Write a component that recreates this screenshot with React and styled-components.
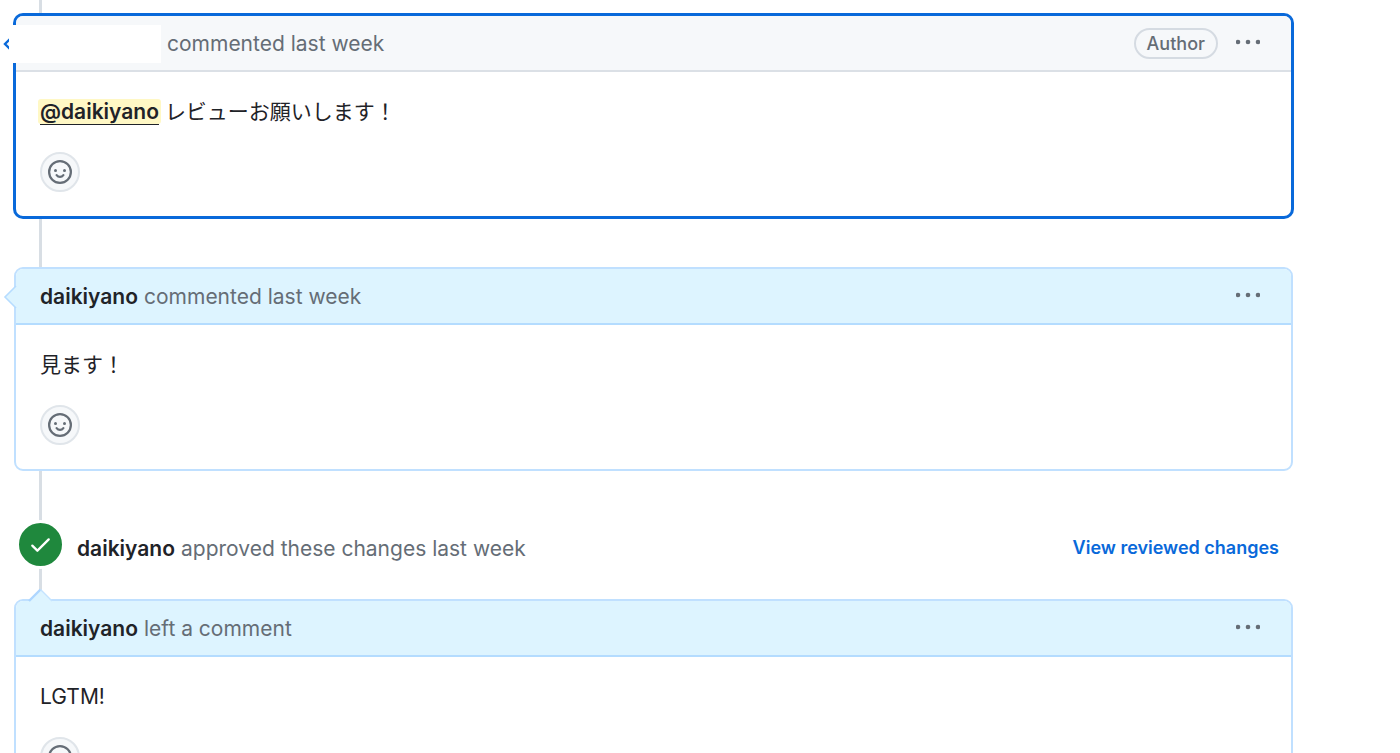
import React from 'react';
import styled, { createGlobalStyle, css } from 'styled-components';

const GlobalStyle = createGlobalStyle`
  * {
    box-sizing: border-box;
  }
  body {
    margin: 0;
    background: #ffffff;
    color: #1f2328;
    font-family: Inter, 'Noto Sans CJK JP', sans-serif;
    font-size: 21px;
    line-height: 32px;
  }
`;

const Page = styled.main`
  height: 100vh;
  overflow: hidden;
  padding: 0 107px 0 14px;
`;

const Timeline = styled.div`
  position: relative;
  z-index: 0;
  display: flex;
  flex-direction: column;
  padding: 14px 0 49px;

  &::before {
    content: '';
    position: absolute;
    z-index: -1;
    top: 0;
    bottom: 0;
    left: 25px;
    width: 3px;
    background: #d8dee4;
  }
`;

const Card = styled.article`
  position: relative;
  border: 2px solid #c0e0ff;
  border-radius: 9px;
  background: #ffffff;

  ${props =>
    props.$selected &&
    css`
      border-color: #0969da;
      box-shadow: 0 0 0 1px #0969da;
      margin-bottom: 49px;
    `}
`;

const CardHeader = styled.header`
  display: flex;
  align-items: center;
  justify-content: space-between;
  height: 56px;
  padding: 0 31px 0 24px;
  border-bottom: 2px solid ${props => (props.$own ? '#dbe0e6' : '#b4dcff')};
  border-radius: 7px 7px 0 0;
  background: ${props => (props.$own ? '#f6f8fa' : '#ddf4ff')};
`;

const Headline = styled.h3`
  display: flex;
  align-items: center;
  gap: 6px;
  margin: 0;
  padding-top: 2px;
  font-size: 21px;
  font-weight: 400;
  color: #656d76;
`;

const UserLink = styled.a`
  color: #1f2328;
  font-weight: 600;
  text-decoration: none;
`;

const HiddenName = styled.span`
  position: relative;
  width: 152px;
  height: 38px;
  margin-left: -31px;
  background: #ffffff;
`;

const HeaderActions = styled.div`
  display: flex;
  align-items: center;
  gap: 18px;
`;

const RoleLabel = styled.span`
  padding: 0 11px;
  border: 2px solid #d5dbe2;
  border-radius: 30px;
  color: #656d76;
  font-size: 18px;
  font-weight: 500;
  line-height: 27px;
`;

const IconButton = styled.button`
  display: flex;
  padding: 0;
  border: 0;
  background: none;
  color: #656d76;
  cursor: pointer;
`;

const CardBody = styled.div`
  display: flex;
  flex-direction: column;
  align-items: flex-start;
  gap: 24px;
  padding: 24px;
`;

const Text = styled.p`
  margin: 0;
`;

const Mention = styled.a`
  margin: 0 -2px;
  padding: 0 2px;
  border-radius: 3px;
  background: #fff8c5;
  color: #1f2328;
  font-weight: 600;
  text-decoration: underline;
  text-decoration-thickness: 1px;
  text-underline-offset: 5px;
  text-decoration-skip-ink: none;
`;

const ReactionButton = styled.button`
  display: flex;
  align-items: center;
  justify-content: center;
  width: 40px;
  height: 40px;
  padding: 0;
  border: 2px solid #e0e5ea;
  border-radius: 50%;
  background: #f6f8fa;
  color: #656d76;
  cursor: pointer;
`;

const SideCaret = styled.svg`
  position: absolute;
  top: 15px;
  left: -13px;
`;

const TopCaret = styled.svg`
  position: absolute;
  top: -13px;
  left: 10px;
`;

const Review = styled.div`
  display: flex;
  align-items: center;
  gap: 12px;
  padding: 49px 14px 30px 2px;
`;

const Badge = styled.span`
  display: flex;
  align-items: center;
  justify-content: center;
  width: 49px;
  height: 49px;
  border: 3px solid #ffffff;
  border-radius: 50%;
  background: #1f883d;
  color: #ffffff;
`;

const ReviewText = styled.div`
  display: flex;
  flex: 1;
  align-items: center;
  justify-content: space-between;
  padding-top: 6px;
`;

const ChangesLink = styled.a`
  color: #0969da;
  font-size: 18px;
  font-weight: 600;
  text-decoration: none;
`;

function KebabIcon() {
  return (
    <svg width="24" height="24" viewBox="0 0 24 24" fill="currentColor">
      <circle cx="2" cy="11" r="2.3" />
      <circle cx="12" cy="11" r="2.3" />
      <circle cx="22" cy="11" r="2.3" />
    </svg>
  );
}

function SmileyIcon() {
  return (
    <svg width="24" height="24" viewBox="0 0 16 16" fill="currentColor">
      <path d="M8 0a8 8 0 1 1 0 16A8 8 0 0 1 8 0ZM1.5 8a6.5 6.5 0 1 0 13 0 6.5 6.5 0 0 0-13 0Z" />
      <circle cx="5" cy="7" r="1" />
      <circle cx="11" cy="7" r="1" />
      <path
        d="M5.75 10.07C6.3 10.8 7.1 11.25 8 11.25S9.7 10.8 10.25 10.07"
        fill="none"
        stroke="currentColor"
        strokeWidth="1.5"
        strokeLinecap="round"
      />
    </svg>
  );
}

function CheckIcon() {
  return (
    <svg width="25" height="25" viewBox="0 0 16 16" fill="currentColor">
      <path d="M13.78 4.22a.75.75 0 0 1 0 1.06l-7.25 7.25a.75.75 0 0 1-1.06 0L2.22 9.28a.751.751 0 0 1 .018-1.042.751.751 0 0 1 1.042-.018L6 10.94l6.72-6.72a.75.75 0 0 1 1.06 0Z" />
    </svg>
  );
}

function Caret({ placement, own }) {
  if (placement === 'top') {
    return (
      <TopCaret width="28" height="14" viewBox="0 0 28 14">
        <path d="M2.5 14L14.5 2L26.5 14Z" fill="#ddf4ff" />
        <path d="M3 13L14.5 1.5" fill="none" stroke="#aed6ff" strokeWidth="2.4" />
        <path d="M14.5 1.5L26 13" fill="none" stroke="#c4e3ff" strokeWidth="1.4" />
      </TopCaret>
    );
  }
  return (
    <SideCaret width="14" height="26" viewBox="0 0 14 26">
      <path d="M14 1L2 13L14 25Z" fill={own ? '#f6f8fa' : '#ddf4ff'} />
      <path
        d="M13 2L2 13L13 24"
        fill="none"
        stroke={own ? '#0969da' : '#b6dcff'}
        strokeWidth={own ? 2.4 : 1.6}
      />
    </SideCaret>
  );
}

function Comment({ user, action, role, own, caret = 'side', children }) {
  return (
    <Card $selected={own}>
      <Caret placement={caret} own={own} />
      <CardHeader $own={own}>
        <Headline>
          {user ? <UserLink href="#user">{user}</UserLink> : <HiddenName />}
          <span>{action}</span>
        </Headline>
        <HeaderActions>
          {role && <RoleLabel>{role}</RoleLabel>}
          <IconButton type="button" aria-label="Show options">
            <KebabIcon />
          </IconButton>
        </HeaderActions>
      </CardHeader>
      <CardBody>
        <Text>{children}</Text>
        <ReactionButton type="button" aria-label="Add reaction">
          <SmileyIcon />
        </ReactionButton>
      </CardBody>
    </Card>
  );
}

export default function App() {
  return (
    <>
      <GlobalStyle />
      <Page>
        <Timeline>
          <Comment own action="commented last week" role="Author">
            <Mention href="#daikiyano">@daikiyano</Mention>{' '}
            レビューお願いします！
          </Comment>
          <Comment user="daikiyano" action="commented last week">
            見ます！
          </Comment>
          <Review>
            <Badge>
              <CheckIcon />
            </Badge>
            <ReviewText>
              <Headline>
                <UserLink href="#user">daikiyano</UserLink>
                <span>approved these changes last week</span>
              </Headline>
              <ChangesLink href="#changes">View reviewed changes</ChangesLink>
            </ReviewText>
          </Review>
          <Comment user="daikiyano" action="left a comment" caret="top">
            LGTM!
          </Comment>
        </Timeline>
      </Page>
    </>
  );
}
